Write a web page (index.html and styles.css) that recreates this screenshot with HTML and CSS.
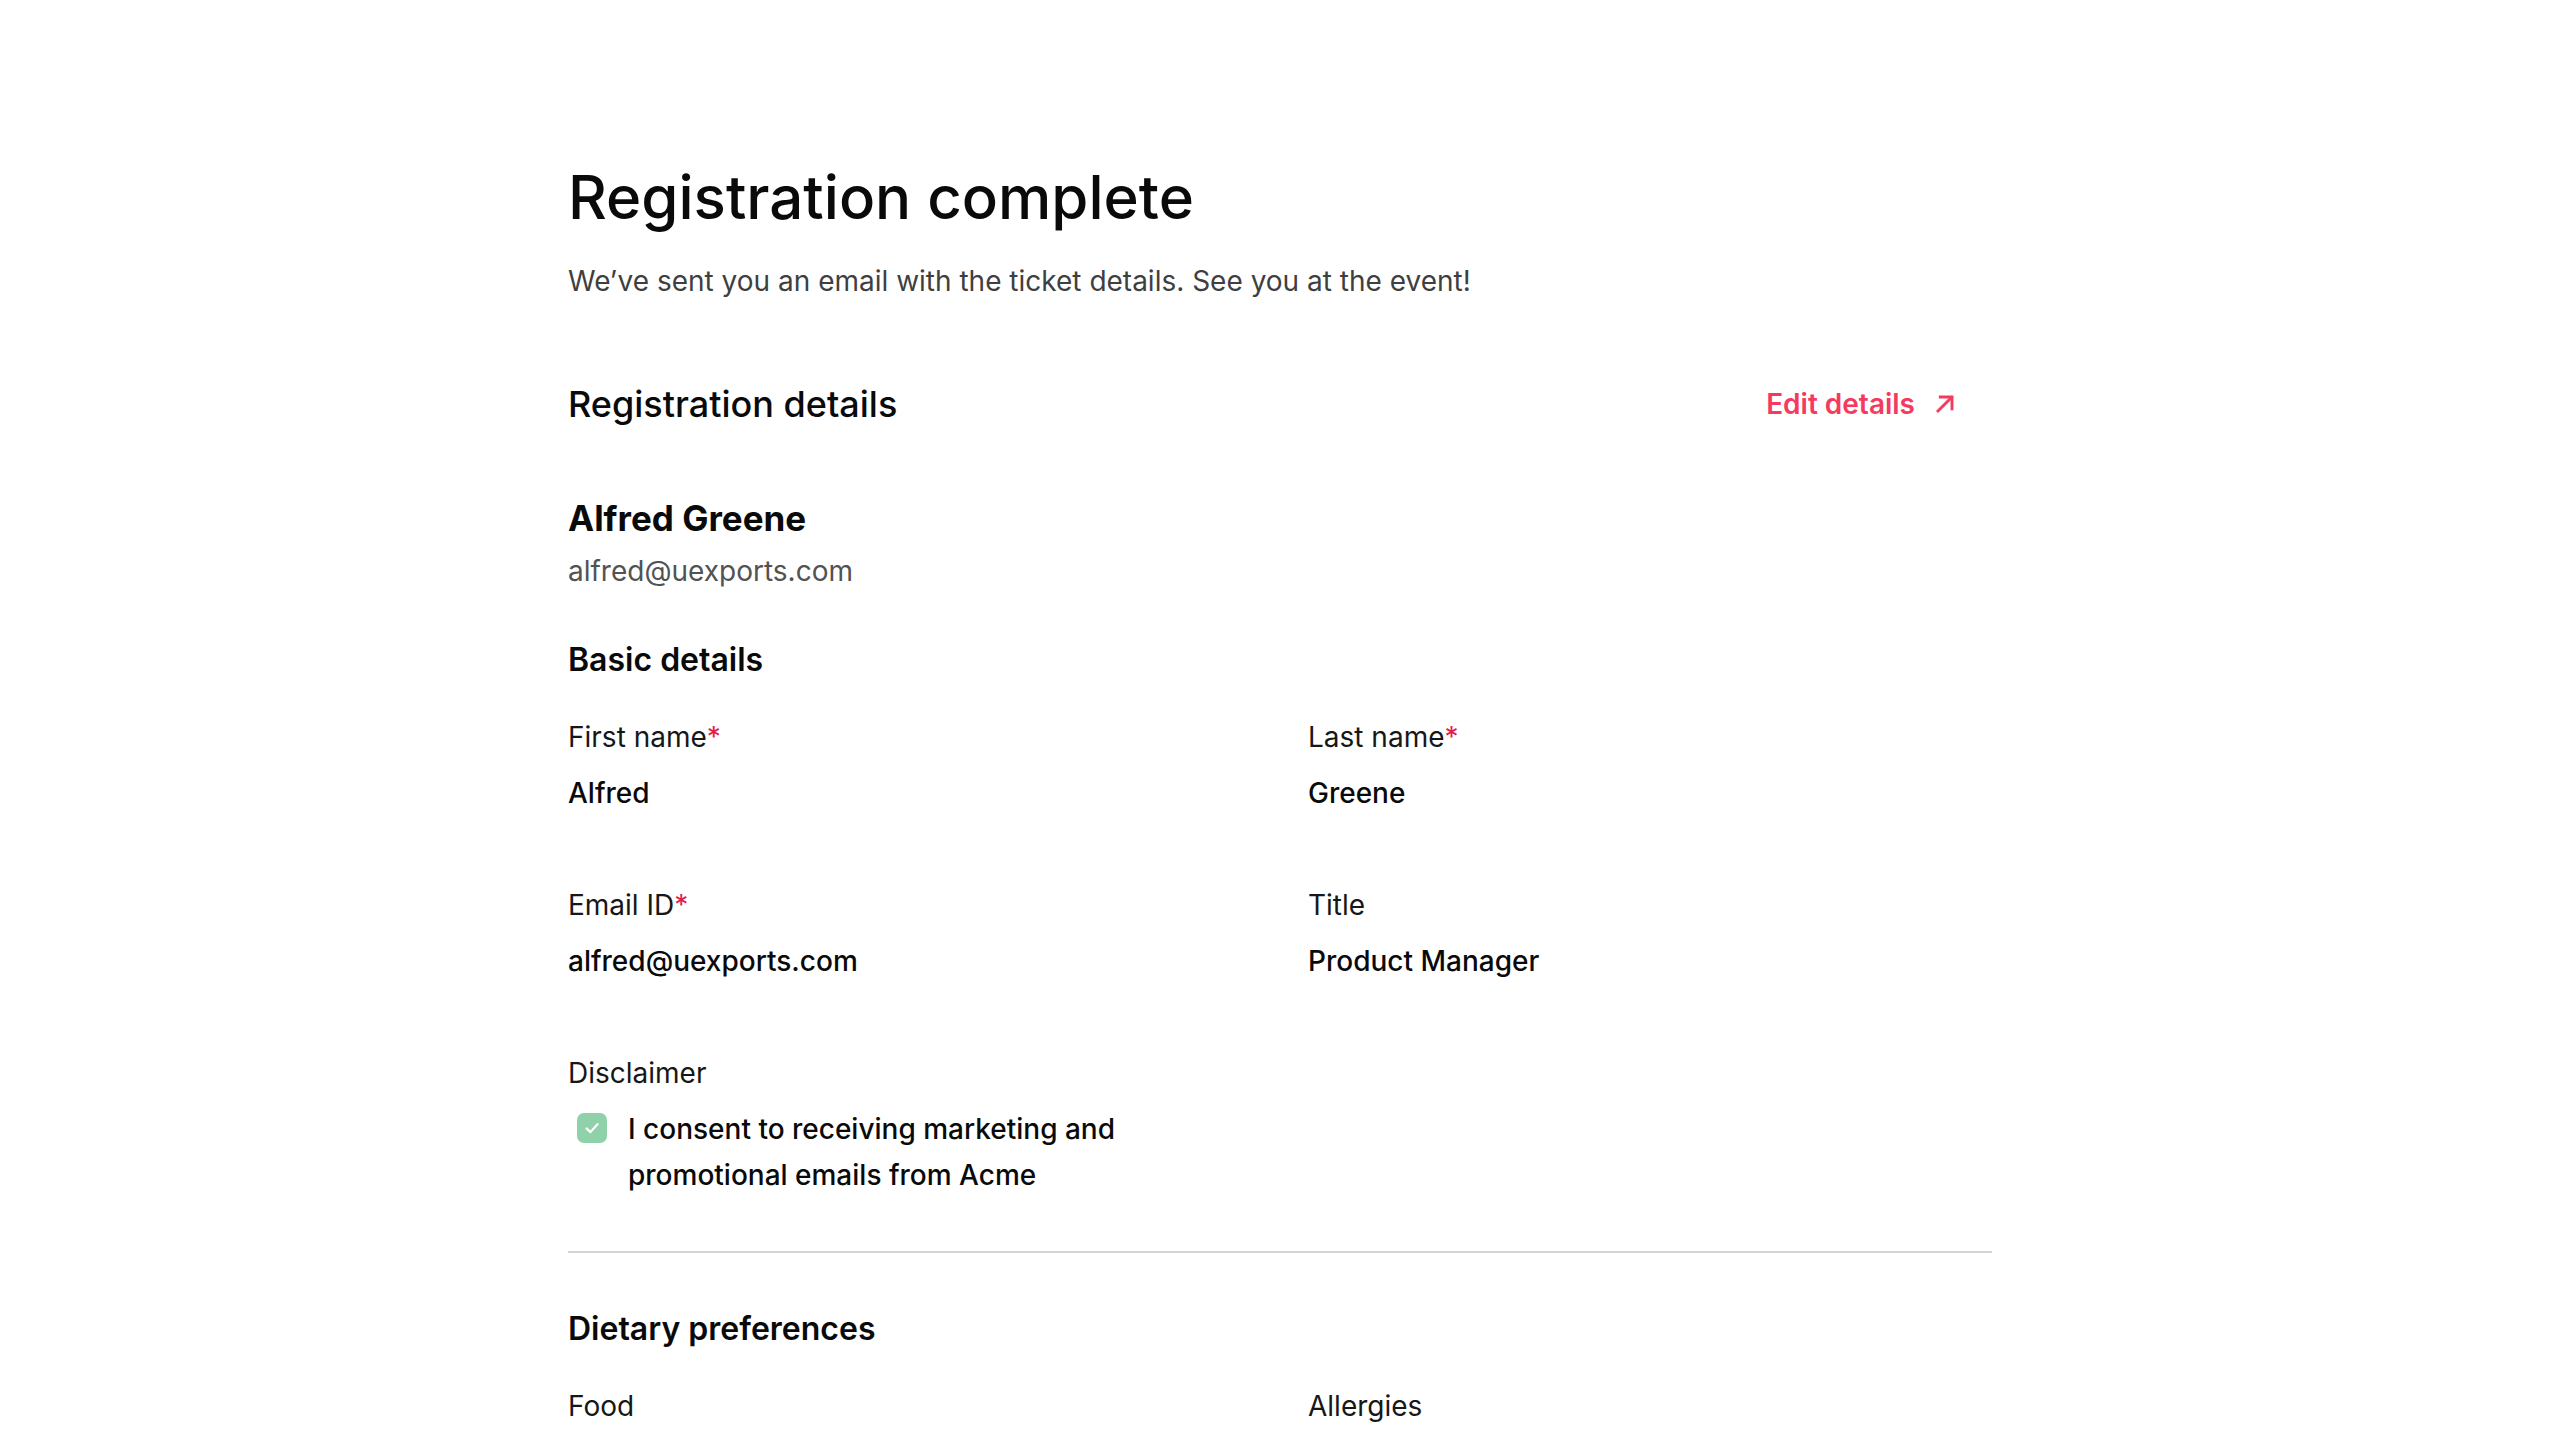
FILE: index.html
```html
<!DOCTYPE html>
<html lang="en">
<head>
<meta charset="utf-8">
<title>Registration complete</title>
<link rel="stylesheet" href="styles.css">
</head>
<body>
<main class="page">
  <h1 class="title">Registration complete</h1>
  <p class="subtitle">We’ve sent you an email with the ticket details. See you at the event!</p>

  <div class="section-head">
    <h2 class="section-title">Registration details</h2>
    <a class="edit-link" href="#">
      <span>Edit details</span>
      <svg class="edit-icon" viewBox="0 0 24 24" fill="none" stroke="currentColor" stroke-width="2.5" stroke-linecap="square" stroke-linejoin="miter">
        <path d="M6 18 L17.5 6.5"/>
        <path d="M8 6 H18 V16"/>
      </svg>
    </a>
  </div>

  <div class="person">
    <div class="person-name">Alfred Greene</div>
    <div class="person-email">alfred@uexports.com</div>
  </div>

  <section class="group">
    <h3 class="group-title">Basic details</h3>
    <div class="fields">
      <div class="field">
        <div class="label">First name<span class="req">*</span></div>
        <div class="value">Alfred</div>
      </div>
      <div class="field">
        <div class="label">Last name<span class="req">*</span></div>
        <div class="value">Greene</div>
      </div>
      <div class="field">
        <div class="label">Email ID<span class="req">*</span></div>
        <div class="value">alfred@uexports.com</div>
      </div>
      <div class="field">
        <div class="label">Title</div>
        <div class="value">Product Manager</div>
      </div>
      <div class="field">
        <div class="label">Disclaimer</div>
        <div class="consent">
          <span class="checkbox">
            <svg viewBox="0 0 16 16" fill="none" stroke="#ffffff" stroke-width="1.6" stroke-linecap="round" stroke-linejoin="round"><path d="M4 8.3 L6.8 11 L12 5.2"/></svg>
          </span>
          <span class="consent-text">I consent to receiving marketing and promotional emails from Acme</span>
        </div>
      </div>
    </div>
  </section>

  <hr class="divider">

  <section class="group group-diet">
    <h3 class="group-title">Dietary preferences</h3>
    <div class="fields">
      <div class="field">
        <div class="label">Food</div>
      </div>
      <div class="field">
        <div class="label">Allergies</div>
      </div>
    </div>
  </section>
</main>
</body>
</html>
```

FILE: styles.css
```css
html, body {
  margin: 0;
  padding: 0;
  background: #ffffff;
}

body {
  font-family: Inter, "Noto Sans", "Liberation Sans", sans-serif;
  color: #0a0a0a;
}

.page {
  width: 1424px;
  margin: 0 auto;
  padding-top: 161px;
}

.title {
  margin: 0;
  font-size: 60px;
  line-height: 72px;
  font-weight: 500;
  color: #0a0a0a;
}

.subtitle {
  margin: 30px 0 0;
  font-size: 28px;
  line-height: 36px;
  font-weight: 400;
  color: #3f3f3f;
}

.section-head {
  margin-top: 83px;
  display: flex;
  align-items: center;
  justify-content: space-between;
  height: 44px;
}

.section-title {
  margin: 0;
  font-size: 36px;
  line-height: 44px;
  font-weight: 500;
  color: #0a0a0a;
}

.edit-link {
  display: flex;
  align-items: center;
  gap: 16px;
  padding-right: 33px;
  font-size: 28px;
  line-height: 44px;
  font-weight: 600;
  color: #f43b5f;
  text-decoration: none;
}

.edit-icon {
  width: 28px;
  height: 28px;
}

.person {
  margin-top: 70px;
}

.person-name {
  font-size: 35px;
  line-height: 44px;
  font-weight: 700;
  color: #0a0a0a;
}

.person-email {
  margin-top: 13px;
  font-size: 28px;
  line-height: 36px;
  color: #525252;
}

.group {
  margin-top: 51px;
}

.group-title {
  margin: 0;
  font-size: 32px;
  line-height: 40px;
  font-weight: 600;
  color: #0a0a0a;
}

.fields {
  margin-top: 39px;
  display: grid;
  grid-template-columns: 684px 684px;
  column-gap: 56px;
  row-gap: 76px;
}

.label {
  font-size: 28px;
  line-height: 36px;
  color: #171717;
}

.req {
  color: #e11d48;
}

.value {
  margin-top: 20px;
  font-size: 28px;
  line-height: 36px;
  font-weight: 500;
  color: #0a0a0a;
}

.consent {
  margin-top: 15px;
  display: flex;
  align-items: flex-start;
  gap: 21px;
  padding-left: 9px;
}

.checkbox {
  flex: none;
  width: 30px;
  height: 30px;
  margin-top: 7px;
  border-radius: 7px;
  background: #8fd1a8;
  display: flex;
  align-items: center;
  justify-content: center;
}

.checkbox svg {
  width: 22px;
  height: 22px;
}

.consent-text {
  font-size: 28px;
  line-height: 46px;
  font-weight: 500;
  color: #0a0a0a;
}

.divider {
  margin: 53px 0 0;
  border: 0;
  height: 2px;
  background: #d4d4d8;
}

.group-diet {
  margin-top: 56px;
}
```
